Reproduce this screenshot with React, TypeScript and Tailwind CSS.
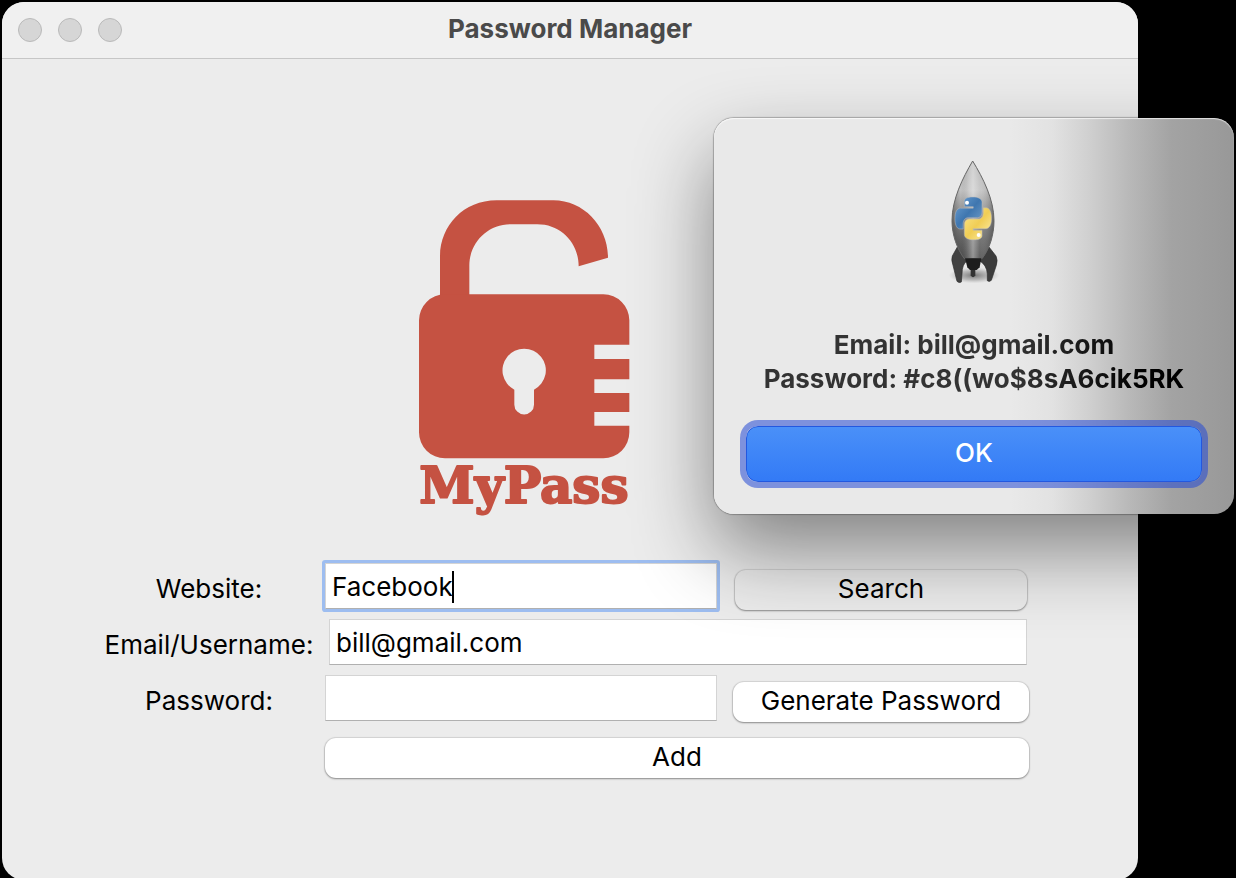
import React from "react";

const PYTHON_HALF =
  "M14.25.18l.9.2.73.26.59.3.45.32.34.34.25.34.16.33.1.3.04.26.02.2-.01.13V8.5l-.05.63-.13.55-.21.46-.26.38-.3.31-.33.25-.35.19-.35.14-.33.1-.3.07-.26.04-.21.02H8.77l-.69.05-.59.14-.5.22-.41.27-.33.32-.27.35-.2.36-.15.37-.1.35-.07.32-.04.27-.02.21v3.06H3.17l-.21-.03-.28-.07-.32-.12-.35-.18-.36-.26-.36-.36-.35-.46-.32-.59-.28-.73-.21-.88-.14-1.05-.05-1.23.06-1.22.16-1.04.24-.87.32-.71.36-.57.4-.44.42-.33.42-.24.4-.16.36-.1.32-.05.24-.01h.16l.06.01h8.16v-.83H6.18l-.01-2.75-.02-.37.05-.34.11-.31.17-.28.25-.26.31-.23.38-.2.44-.18.51-.15.58-.12.64-.1.71-.06.77-.04.84-.02 1.27.05z";

const HULL = "M158 33C128 84 96 148 96 212C96 256 112 298 133 326H186C208 298 222 256 222 212C222 148 189 84 158 33Z";

function Logo() {
  return (
    <svg viewBox="-12 0 750 1050" className="h-[350px] w-[250px]" role="img" aria-label="MyPass">
      <g fill="#c55242">
        <path d="M120 370V230C120 138 190 61 290 61H460C552 61 624 140 624 233L536 259C536 190 484 133 412 133H330C262 133 208 190 208 256V370Z" />
        <path d="M135 343H610A78 78 0 0 1 688 421V494H583V537H688V598H583V639H688V696H583V737H688V757A78 78 0 0 1 610 835H135A78 78 0 0 1 57 757V421A78 78 0 0 1 135 343Z" />
        <text
          x="372"
          y="970"
          textAnchor="middle"
          fontSize="150"
          fontWeight="700"
          fontFamily="'DejaVu Serif', serif"
          stroke="#c55242"
          strokeWidth="6"
          strokeLinejoin="round"
        >
          MyPass
        </text>
      </g>
      <path
        fill="#ececec"
        d="M343 629A65 65 0 1 1 402 629V674A29.500 29.500 0 0 1 343 674Z"
      />
    </svg>
  );
}

function Rocket() {
  return (
    <svg viewBox="-3 0 330 435" className="h-[145px] w-[110px]" aria-hidden="true">
      <defs>
        <linearGradient id="hull" x1="0" x2="0" y1="0" y2="1">
          <stop offset="0" stopColor="#b4b4b4" />
          <stop offset=".3" stopColor="#c2c2c2" />
          <stop offset=".55" stopColor="#8c8c8c" />
          <stop offset=".8" stopColor="#626262" />
          <stop offset="1" stopColor="#4c4c4c" />
        </linearGradient>
        <linearGradient id="sheen" x1="0" x2="1" y1="0" y2="0">
          <stop offset="0" stopColor="#333" stopOpacity=".4" />
          <stop offset=".2" stopColor="#555" stopOpacity="0" />
          <stop offset=".4" stopColor="#fff" stopOpacity=".2" />
          <stop offset=".5" stopColor="#fff" stopOpacity=".4" />
          <stop offset=".66" stopColor="#fff" stopOpacity=".12" />
          <stop offset="1" stopColor="#333" stopOpacity=".4" />
        </linearGradient>
        <linearGradient id="blue" x1="0" x2="1" y1="0" y2="1">
          <stop offset="0" stopColor="#6fa3d6" />
          <stop offset=".5" stopColor="#3f76af" />
          <stop offset="1" stopColor="#79a3cb" />
        </linearGradient>
        <linearGradient id="yellow" x1="1" x2="0" y1="1" y2="0">
          <stop offset="0" stopColor="#fbe88e" />
          <stop offset=".5" stopColor="#f0cd55" />
          <stop offset="1" stopColor="#fdf0b0" />
        </linearGradient>
        <radialGradient id="ground">
          <stop offset="0" stopColor="#444" stopOpacity=".7" />
          <stop offset=".6" stopColor="#777" stopOpacity=".4" />
          <stop offset="1" stopColor="#999" stopOpacity="0" />
        </radialGradient>
      </defs>
      <ellipse cx="162" cy="376" rx="76" ry="24" fill="url(#ground)" />
      <path d="M152 354H166V376Q159 388 152 376Z" fill="#333" />
      <path
        d="M112 291L97 318Q93 330 99 346L111 394Q117 400 124 396L126 372Q126 342 142 332L128 308Z"
        fill="#424242"
        stroke="#2c2c2c"
        strokeWidth="2"
      />
      <path
        d="M207 291L228 318Q234 330 229 346L214 391Q208 397 202 392L202 372Q200 344 178 332L192 308Z"
        fill="#3c3c3c"
        stroke="#2c2c2c"
        strokeWidth="2"
      />
      <path d={HULL} fill="url(#hull)" />
      <path d={HULL} fill="url(#sheen)" stroke="#666" strokeWidth="3" />
      <path d="M135 325H184L179 352L170 360H150L142 352Z" fill="#1d1d1d" />
      <g transform="translate(105 141) scale(4.550 5.350)">
        <path d={PYTHON_HALF} fill="url(#blue)" stroke="#bdbdbd" strokeOpacity=".6" strokeWidth=".5" />
        <path
          d={PYTHON_HALF}
          transform="rotate(180 12 12)"
          fill="url(#yellow)"
          stroke="#bdbdbd"
          strokeOpacity=".6"
          strokeWidth=".5"
        />
      </g>
      <circle cx="141" cy="158" r="6" fill="#fff" />
      <circle cx="176" cy="255" r="6" fill="#fff" />
    </svg>
  );
}

function Label({ htmlFor, children }: { htmlFor: string; children: React.ReactNode }) {
  return (
    <label
      htmlFor={htmlFor}
      className="col-start-1 flex items-center justify-center pt-1.5 whitespace-nowrap"
    >
      {children}
    </label>
  );
}

const field =
  "h-[46px] w-full border border-[#d4d4d4] border-b-[#b0b0b0] bg-white px-1.5 outline-none";
const button =
  "h-10 w-full rounded-[11px] pb-0.5 shadow-[0_0_1px_1px_rgba(0,0,0,0.10),0_1px_2px_rgba(0,0,0,0.35)]";

export default function App() {
  return (
    <div className="relative h-screen overflow-hidden bg-black pt-0.5 pr-[98px] pl-0.5 font-['Inter',sans-serif] text-[26px] leading-8 text-black">
      <main className="min-h-screen overflow-hidden rounded-[22px] bg-[#ececec]">
        <header className="grid h-[57px] grid-cols-[1fr_auto_1fr] items-center border-b border-[#c6c6c6] bg-[#f0f0f0] px-4">
          <div className="flex gap-4">
            <button aria-label="Close" className="size-6 rounded-full border border-[#b9b9b9] bg-[#d6d6d6]" />
            <button aria-label="Minimize" className="size-6 rounded-full border border-[#b9b9b9] bg-[#d6d6d6]" />
            <button aria-label="Zoom" className="size-6 rounded-full border border-[#b9b9b9] bg-[#d6d6d6]" />
          </div>
          <h1 className="pb-0.5 font-bold text-[#4a4a4a]">Password Manager</h1>
        </header>

        <form
          className="mx-auto grid max-w-[938px] grid-cols-[216fr_408fr_312fr] grid-rows-[378px_56px_56px_56px_56px] pt-[121px] pr-0.5"
          onSubmit={(e) => e.preventDefault()}
        >
          <div className="col-start-2 flex justify-center">
            <Logo />
          </div>

          <Label htmlFor="website">Website:</Label>
          <div className="flex items-center px-2">
            <div className="relative flex w-full">
              <input
                id="website"
                defaultValue="Facebook"
                className={`${field} rounded-[1px] ring-3 ring-[#9dbdf0]`}
              />
              <span className="absolute top-2 left-[127px] h-8 w-0.5 bg-black" />
            </div>
          </div>
          <div className="flex items-center px-2.5 pt-2">
            <button className={`${button} bg-[#ececec]`}>Search</button>
          </div>

          <Label htmlFor="email">Email/Username:</Label>
          <div className="col-span-2 flex items-center pr-2.5 pl-3">
            <input id="email" defaultValue="bill@gmail.com" className={field} />
          </div>

          <Label htmlFor="password">Password:</Label>
          <div className="flex items-center px-2">
            <input id="password" className={field} />
          </div>
          <div className="flex items-center px-2 pt-2">
            <button className={`${button} bg-white whitespace-nowrap`}>Generate Password</button>
          </div>

          <div className="col-span-2 col-start-2 flex items-center px-2 pt-2">
            <button className={`${button} bg-white`}>Add</button>
          </div>
        </form>
      </main>

      <section
        role="dialog"
        aria-label="Saved login"
        className="absolute top-[118px] right-0.5 flex w-[520px] flex-col items-center rounded-[20px] bg-[linear-gradient(to_right,#e9e9e9_57%,#e2e2e2_65%,#d0d0d0_72%,#b8b8b8_80%,#a3a3a3_88%,#989898_100%)] px-8 pt-8 pb-8 shadow-[inset_0_1px_1px_rgba(255,255,255,0.7),0_0_1px_1px_rgba(0,0,0,0.25),0_36px_80px_rgba(0,0,0,0.45)]"
      >
        <Rocket />
        <p className="mt-[33px] bg-[linear-gradient(to_right,#333_60%,#000_90%)] bg-clip-text text-center leading-[34px] font-bold whitespace-nowrap text-transparent">
          Email: bill@gmail.com
          <br />
          Password: #c8((wo$8sA6cik5RK
        </p>
        <button className="mt-[30px] h-14 w-full rounded-xl border border-[#2258e0] bg-linear-to-b from-[#4a90f8] to-[#337af6] pb-0.5 font-medium text-white ring-[6px] ring-[#2448d4]/55">
          OK
        </button>
      </section>
    </div>
  );
}
